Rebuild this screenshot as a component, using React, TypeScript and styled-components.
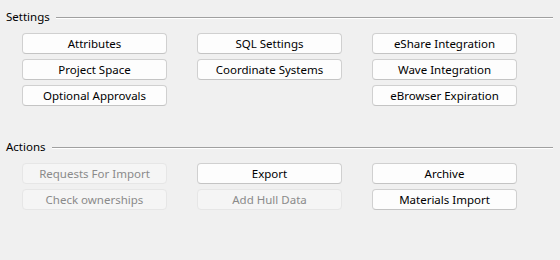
import React from "react";
import styled, { createGlobalStyle } from "styled-components";

const Global = createGlobalStyle`
  html, body { margin: 0; padding: 0; background: #f0f0f0; }
  body { font-family: "Noto Sans", "Open Sans", sans-serif; font-size: 11px; color: #000; }
`;

const Page = styled.div`
  width: 560px;
  height: 260px;
  box-sizing: border-box;
  padding: 9px 7px 0 6px;
  display: flex;
  flex-direction: column;
`;

const Section = styled.section<{ $gapBefore?: number }>`
  margin-top: ${(p) => p.$gapBefore ?? 0}px;
  display: flex;
  flex-direction: column;
  gap: 8px;
`;

const Header = styled.div`
  display: flex;
  align-items: center;
  height: 16px;
  gap: 6px;
`;

const Label = styled.span`
  font-size: 11.5px;
  line-height: 16px;
  white-space: nowrap;
`;

const Rule = styled.div`
  flex: 1;
  height: 1px;
  background: #a0a0a0;
  border-bottom: 1px solid #ffffff;
  margin-top: 2px;
`;

const Grid = styled.div`
  margin-left: 16px;
  display: grid;
  grid-template-columns: repeat(3, 145px);
  grid-auto-rows: 21px;
  column-gap: 30px;
  row-gap: 5px;
`;

const Button = styled.button<{ $col: number }>`
  grid-column: ${(p) => p.$col};
  box-sizing: border-box;
  height: 21px;
  padding: 0;
  margin: 0;
  font: inherit;
  font-size: 11.5px;
  line-height: 19px;
  text-align: center;
  color: #000;
  background: #fdfdfd;
  border: 1px solid #d0d0d0;
  border-bottom-color: #c4c4c4;
  border-radius: 4px;
  &:disabled {
    color: #8a8a8a;
    background: #f5f5f5;
    border-color: #e6e6e6;
  }
`;

type Item = { label: string; col: number; disabled?: boolean };

const settings: Item[] = [
  { label: "Attributes", col: 1 },
  { label: "SQL Settings", col: 2 },
  { label: "eShare Integration", col: 3 },
  { label: "Project Space", col: 1 },
  { label: "Coordinate Systems", col: 2 },
  { label: "Wave Integration", col: 3 },
  { label: "Optional Approvals", col: 1 },
  { label: "eBrowser Expiration", col: 3 },
];

const actions: Item[] = [
  { label: "Requests For Import", col: 1, disabled: true },
  { label: "Export", col: 2 },
  { label: "Archive", col: 3 },
  { label: "Check ownerships", col: 1, disabled: true },
  { label: "Add Hull Data", col: 2, disabled: true },
  { label: "Materials Import", col: 3 },
];

function Group({ title, items, gapBefore }: { title: string; items: Item[]; gapBefore?: number }) {
  return (
    <Section $gapBefore={gapBefore}>
      <Header>
        <Label>{title}</Label>
        <Rule />
      </Header>
      <Grid>
        {items.map((it) => (
          <Button key={it.label} $col={it.col} disabled={it.disabled}>
            {it.label}
          </Button>
        ))}
      </Grid>
    </Section>
  );
}

export default function App() {
  return (
    <>
      <Global />
      <Page>
        <Group title="Settings" items={settings} />
        <Group title="Actions" items={actions} gapBefore={33} />
      </Page>
    </>
  );
}
